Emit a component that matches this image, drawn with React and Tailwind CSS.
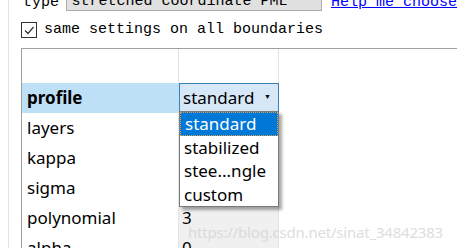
import React from "react";

const rows = [
  { name: "layers", value: "" },
  { name: "kappa", value: "" },
  { name: "sigma", value: "" },
  { name: "polynomial", value: "3" },
  { name: "alpha", value: "0" },
];

const options = ["standard", "stabilized", "stee...ngle", "custom"];

const mono = { fontFamily: "'Liberation Mono', 'DejaVu Sans Mono', monospace" };

const App = () => {
  return (
    <div
      className="relative w-[457px] h-[248px] overflow-hidden bg-white text-black"
      style={{ fontFamily: "'Noto Sans', 'Open Sans', sans-serif" }}
    >
      <div className="ml-[8px] h-full border-l border-[#e3e3e3] pl-[12px] flex flex-col">
        {/* PML type row, cut off at the top */}
        <div className="mt-[-13px] h-[24px] flex items-end text-[15px]" style={mono}>
          <span className="ml-[2px] w-[44px] leading-[15px] mb-[1px]">type</span>
          <div className="w-[259px] h-[24px] flex items-end justify-between border border-[#adadad] bg-[#e1e1e1] pl-[4px] pr-[8px]">
            <span className="leading-[16px]">stretched coordinate PML</span>
            <span className="text-[8px] mb-[9px]">▼</span>
          </div>
          <a className="ml-[9px] leading-[16px] text-[#0000ff] underline whitespace-nowrap" href="#">
            Help me choose
          </a>
        </div>

        {/* checkbox */}
        <div className="mt-[11px] h-[15px] flex items-center">
          <div className="w-[16px] h-[16px] border border-[#333] bg-white flex items-center justify-center">
            <svg width="12" height="12" viewBox="0 0 12 12">
              <path d="M2 6.5 L5 9.5 L10.5 3" fill="none" stroke="#333" strokeWidth="1.2" />
            </svg>
          </div>
          <span className="ml-[7px] text-[15px] mt-[1px]" style={mono}>
            same settings on all boundaries
          </span>
        </div>

        {/* property table */}
        <div className="mt-[11px] flex-1 border-l border-t border-[#a0a0a0] grid grid-cols-[157px_100px_1fr] grid-rows-[34px_30px_30px_30px_30px_30px_30px] text-[17px]">
          <div className="border-r border-[#e3e3e3]" />
          <div className="border-r border-[#e3e3e3]" />
          <div />

          <div className="bg-[#bee0f7] pl-[5px] flex items-center font-bold">profile</div>
          <div className="relative border-r border-[#e3e3e3]">
            <div className="absolute left-0 top-0 w-[100px] h-[29px] border border-[#3c7fb1] bg-[#d6e8f7] pl-[3px] pr-[7px] flex items-center justify-between">
              <span>standard</span>
              <span className="text-[7px]">▼</span>
            </div>
            <div className="absolute z-10 left-0 top-[28px] w-[100px] bg-white border border-[#7a7a7a] shadow-[3px_3px_3px_rgba(0,0,0,0.35)]">
              {options.map((opt, i) => (
                <div
                  key={opt}
                  className={`h-[23.5px] pl-[4px] flex items-center ${
                    i === 0 ? "bg-[#0078d7] text-white border border-dotted border-[#e0a050]" : ""
                  }`}
                >
                  {opt}
                </div>
              ))}
            </div>
          </div>
          <div />

          {rows.map((row) => (
            <React.Fragment key={row.name}>
              <div className="pl-[5px] flex items-center border-r border-[#e3e3e3]">{row.name}</div>
              <div className="bg-[#f0f0f0] pl-[3px] flex items-center border-r border-[#e3e3e3]">{row.value}</div>
              <div />
            </React.Fragment>
          ))}
        </div>
      </div>

      {/* watermark */}
      <div className="absolute left-[188px] top-[221px] text-[15px] tracking-[-0.2px] text-[#d6d6d6] opacity-80 whitespace-nowrap pointer-events-none">
        https://blog.csdn.net/sinat_34842383
      </div>
    </div>
  );
};

export default App;
